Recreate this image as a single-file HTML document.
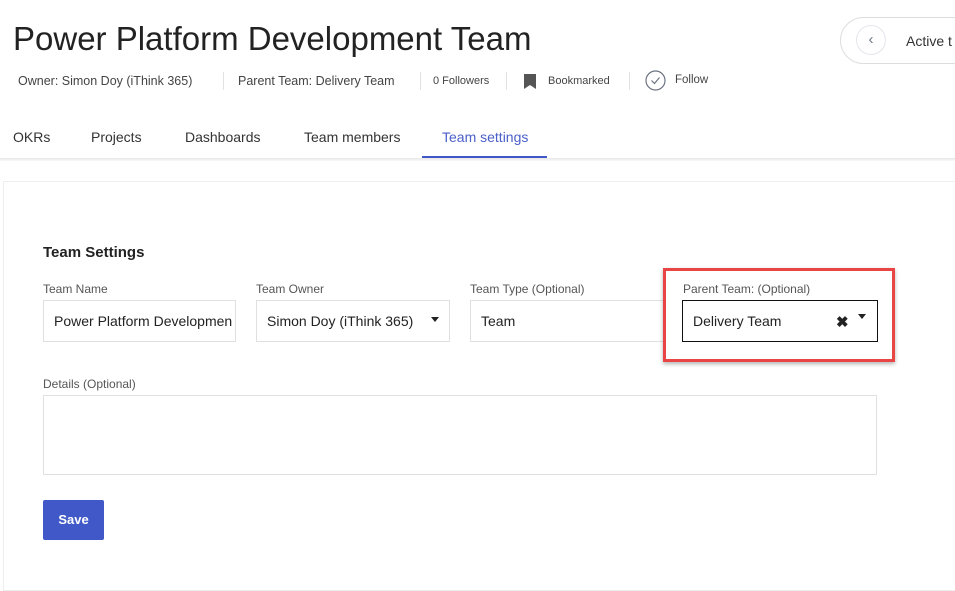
<!DOCTYPE html>
<html><head><style>
body{margin:0;width:955px;height:586px;overflow:hidden;background:#fff;font-family:"Liberation Sans",sans-serif;color:#222;position:relative}
.a{position:absolute;white-space:nowrap}
.sep{position:absolute;top:72px;width:1px;height:18px;background:#e2e2e2}
.lbl{position:absolute;font-size:12px;color:#555}
.inp{position:absolute;top:300px;border:1px solid #e0e0e0;font-size:14px;line-height:40px;padding-left:10px;box-sizing:border-box;height:42px;overflow:hidden;white-space:nowrap;color:#222}
.tab{position:absolute;top:129px;font-size:14px;color:#333}
.caret{position:absolute;width:0;height:0;border-left:4px solid transparent;border-right:4px solid transparent;border-top:5px solid #222}
</style></head><body>
<div class="a" style="left:13px;top:20px;font-size:33px;color:#222">Power Platform Development Team</div>
<div style="position:absolute;left:840px;top:17px;width:140px;height:47px;border:1px solid #ddd;border-radius:24px;box-sizing:border-box"></div>
<div style="position:absolute;left:856px;top:25px;width:30px;height:30px;border:1px solid #e4e6ec;border-radius:50%;box-sizing:border-box;color:#6b7280;font-size:15px;text-align:center;line-height:27px">‹</div>
<div class="a" style="left:906px;top:33px;font-size:14px;color:#333">Active t</div>
<div class="a" style="left:18px;top:74px;font-size:12.5px;color:#444">Owner: Simon Doy (iThink 365)</div>
<div class="sep" style="left:223px"></div>
<div class="a" style="left:238px;top:74px;font-size:12.5px;color:#444">Parent Team: Delivery Team</div>
<div class="sep" style="left:420px"></div>
<div class="a" style="left:433px;top:75px;font-size:11px;color:#444">0 Followers</div>
<div class="sep" style="left:506px"></div>
<svg style="position:absolute;left:523px;top:73px" width="14" height="17"><path d="M1 1h12v15l-6-4-6 4z" fill="#555"/></svg>
<div class="a" style="left:548px;top:75px;font-size:11px;color:#444">Bookmarked</div>
<div class="sep" style="left:629px"></div>
<svg style="position:absolute;left:645px;top:70px" width="21" height="21"><circle cx="10.5" cy="10.5" r="9.5" fill="none" stroke="#6b7280" stroke-width="1.2"/><path d="M6.5 10.5l3 3 5-6" fill="none" stroke="#6b7280" stroke-width="1.2"/></svg>
<div class="a" style="left:675px;top:74px;font-size:11.5px;color:#444">Follow</div>
<div class="tab" style="left:13px">OKRs</div>
<div class="tab" style="left:91px">Projects</div>
<div class="tab" style="left:185px">Dashboards</div>
<div class="tab" style="left:304px">Team members</div>
<div class="tab" style="left:442px;color:#4a5fc9">Team settings</div>
<div style="position:absolute;left:422px;top:156px;width:125px;height:2px;background:#4058c8"></div>
<div style="position:absolute;left:0;top:158px;width:955px;height:3px;background:linear-gradient(#e6e6e6,#fafafa)"></div>
<div style="position:absolute;left:3px;top:181px;width:960px;height:410px;border:1px solid #eee;box-sizing:border-box"></div>
<div class="a" style="left:43px;top:244px;font-size:15px;font-weight:bold;color:#222">Team Settings</div>
<div class="lbl" style="left:43px;top:282px">Team Name</div>
<div class="inp" style="left:43px;width:193px">Power Platform Developmen</div>
<div class="lbl" style="left:256px;top:282px">Team Owner</div>
<div class="inp" style="left:256px;width:194px">Simon Doy (iThink 365)</div>
<div class="caret" style="left:431px;top:317px"></div>
<div class="lbl" style="left:470px;top:282px">Team Type (Optional)</div>
<div class="inp" style="left:470px;width:200px">Team</div>
<div style="position:absolute;left:663px;top:268px;width:232px;height:94px;border:3px solid #e94545;box-sizing:border-box;background:#fff;box-shadow:0 2px 4px rgba(0,0,0,.3)"></div>
<div class="lbl" style="left:683px;top:282px">Parent Team: (Optional)</div>
<div class="inp" style="left:682px;width:196px;border:1px solid #111">Delivery Team</div>
<div class="a" style="left:836px;top:313px;font-size:15px;font-weight:bold">✖</div>
<div class="caret" style="left:858px;top:314px"></div>
<div class="lbl" style="left:43px;top:377px">Details (Optional)</div>
<div style="position:absolute;left:43px;top:395px;width:834px;height:80px;border:1px solid #e0e0e0;box-sizing:border-box"></div>
<div style="position:absolute;left:43px;top:500px;width:61px;height:40px;background:#4058c8;border-radius:2px;color:#fff;font-size:13px;font-weight:bold;text-align:center;line-height:40px">Save</div>
</body></html>
